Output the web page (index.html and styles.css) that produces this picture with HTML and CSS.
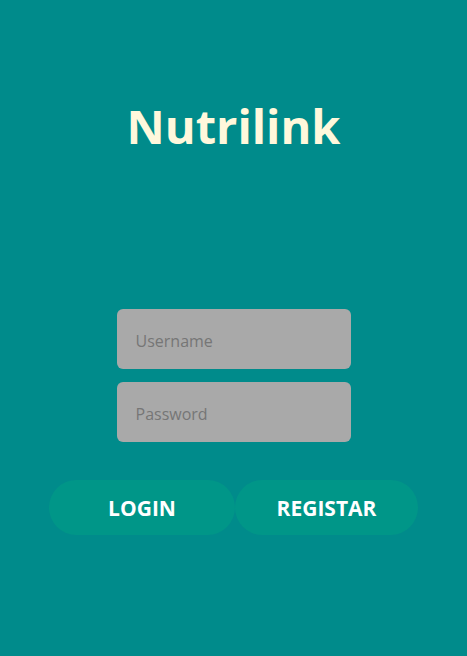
FILE: index.html
```html
<!DOCTYPE html>
<html>
<head>
<meta charset="utf-8">
<link rel="stylesheet" href="styles.css">
</head>
<body>
<div class="page">
  <h1 class="title">Nutrilink</h1>
  <form class="form">
    <input class="field" type="text" placeholder="Username">
    <input class="field" type="password" placeholder="Password">
  </form>
  <div class="actions">
    <button class="btn btn-login">LOGIN</button>
    <button class="btn btn-register">REGISTAR</button>
  </div>
</div>
</body>
</html>
```
FILE: styles.css
```css
html, body {
  margin: 0;
  padding: 0;
  height: 100%;
  background: #008b8b;
  font-family: "Open Sans", "Noto Sans", sans-serif;
}
.page {
  display: flex;
  flex-direction: column;
  align-items: center;
  padding-top: 92px;
}
.title {
  margin: 0;
  font-size: 47px;
  font-weight: 700;
  color: #fff8dc;
  line-height: 68px;
  letter-spacing: 0;
}
.form {
  display: flex;
  flex-direction: column;
  gap: 13px;
  margin-top: 149px;
}
.field {
  box-sizing: border-box;
  width: 234px;
  height: 60px;
  border: none;
  border-radius: 6px;
  background: #a9a9a9;
  padding: 3px 19px 0;
  font-family: inherit;
  font-size: 16px;
  color: #333;
  outline: none;
}
.field::placeholder {
  color: #767676;
}
.actions {
  display: flex;
  margin-top: 38px;
}
.btn {
  height: 55px;
  border: none;
  border-radius: 28px;
  background: #009688;
  color: #fff;
  font-family: inherit;
  font-size: 21px;
  font-weight: 700;
  padding: 0;
}
.btn-login { width: 186px; }
.btn-register { width: 183px; }
```
